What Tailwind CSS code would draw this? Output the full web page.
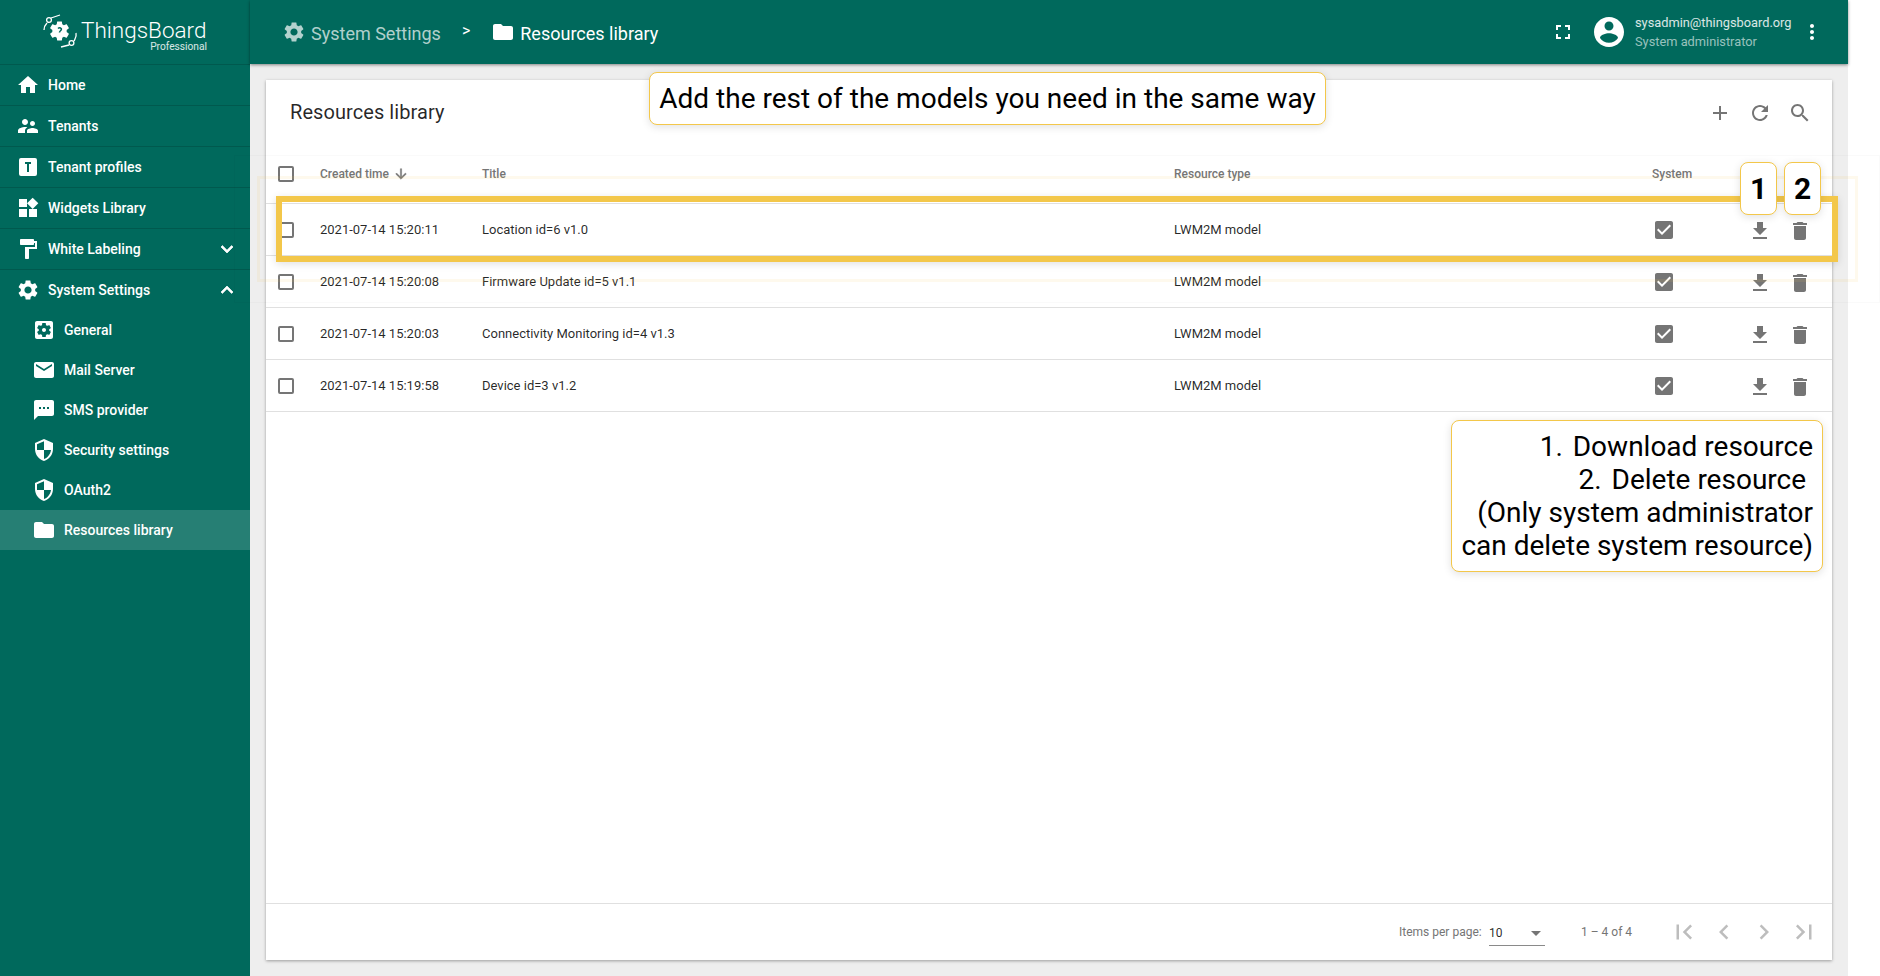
<!DOCTYPE html>
<html lang="en">
<head>
    <meta charset="UTF-8">
    <title>Resources library</title>
    <script src="https://cdn.jsdelivr.net/npm/@tailwindcss/browser@4"></script>
</head>
<body class="bg-white font-['Roboto',sans-serif] overflow-hidden">
    <svg class="hidden">
        <symbol id="i-home" viewBox="0 0 24 24"><path d="M10 20v-6h4v6h5v-8h3L12 3 2 12h3v8z"/></symbol>
        <symbol id="i-people" viewBox="0 0 24 24"><path d="M16.5 12c1.38 0 2.49-1.12 2.49-2.5S17.88 7 16.5 7C15.12 7 14 8.12 14 9.5s1.12 2.5 2.5 2.5zM9 11c1.66 0 2.99-1.34 2.99-3S10.66 5 9 5C7.34 5 6 6.34 6 8s1.34 3 3 3zm7.5 3c-1.83 0-5.5.92-5.5 2.75V19h11v-2.25c0-1.83-3.67-2.75-5.5-2.75zM9 13c-2.33 0-7 1.17-7 3.5V19h7v-2.25c0-.85.33-2.34 2.37-3.47C10.5 13.1 9.66 13 9 13z"/></symbol>
        <symbol id="i-tbox" viewBox="0 0 24 24"><path d="M9 7V9H11V17H13V9H15V7H9M5 3H19A2 2 0 0 1 21 5V19A2 2 0 0 1 19 21H5A2 2 0 0 1 3 19V5A2 2 0 0 1 5 3Z"/></symbol>
        <symbol id="i-widgets" viewBox="0 0 24 24"><path d="M13 13v8h8v-8h-8zM3 21h8v-8H3v8zM3 3v8h8V3H3zm13.66-1.31L11 7.34 16.66 13l5.66-5.66-5.66-5.65z"/></symbol>
        <symbol id="i-paint" viewBox="0 0 24 24"><path d="M18 4V3c0-.55-.45-1-1-1H5c-.55 0-1 .45-1 1v4c0 .55.45 1 1 1h12c.55 0 1-.45 1-1V6h1v4H9v11c0 .55.45 1 1 1h2c.55 0 1-.45 1-1v-9h8V4h-3z"/></symbol>
        <symbol id="i-settings" viewBox="0 0 24 24"><path d="M19.14,12.94c0.04-0.3,0.06-0.61,0.06-0.94c0-0.32-0.02-0.64-0.07-0.94l2.03-1.58c0.18-0.14,0.23-0.41,0.12-0.61 l-1.92-3.32c-0.12-0.22-0.37-0.29-0.59-0.22l-2.39,0.96c-0.5-0.38-1.03-0.7-1.62-0.94L14.4,2.81c-0.04-0.24-0.24-0.41-0.48-0.41 h-3.84c-0.24,0-0.43,0.17-0.47,0.41L9.25,5.35C8.66,5.59,8.12,5.92,7.63,6.29L5.24,5.33c-0.22-0.08-0.47,0-0.59,0.22L2.74,8.87 C2.62,9.08,2.66,9.34,2.86,9.48l2.03,1.58C4.84,11.36,4.8,11.69,4.8,12s0.02,0.64,0.07,0.94l-2.03,1.58 c-0.18,0.14-0.23,0.41-0.12,0.61l1.92,3.32c0.12,0.22,0.37,0.29,0.59,0.22l2.39-0.96c0.5,0.38,1.03,0.7,1.62,0.94l0.36,2.54 c0.05,0.24,0.24,0.41,0.48,0.41h3.84c0.24,0,0.44-0.17,0.47-0.41l0.36-2.54c0.59-0.24,1.13-0.56,1.62-0.94l2.39,0.96 c0.22,0.08,0.47,0,0.59-0.22l1.92-3.32c0.12-0.22,0.07-0.47-0.12-0.61L19.14,12.94z M12,15.6c-1.98,0-3.6-1.62-3.6-3.6 s1.62-3.6,3.6-3.6s3.6,1.62,3.6,3.6S13.98,15.6,12,15.6z"/></symbol>
        <symbol id="i-general" viewBox="0 0 24 24"><path d="M12 10c-1.1 0-2 .9-2 2s.9 2 2 2 2-.9 2-2-.9-2-2-2zm7-7H5c-1.11 0-2 .9-2 2v14c0 1.1.89 2 2 2h14c1.11 0 2-.9 2-2V5c0-1.1-.89-2-2-2zm-1.75 9c0 .23-.02.46-.05.68l1.48 1.16c.13.11.17.3.08.45l-1.4 2.42c-.09.15-.27.21-.43.15l-1.74-.7c-.36.28-.76.51-1.18.69l-.26 1.85c-.03.17-.18.3-.35.3h-2.8c-.17 0-.32-.13-.35-.3l-.26-1.85c-.43-.18-.82-.41-1.18-.69l-1.74.7c-.16.06-.34 0-.43-.15l-1.4-2.42c-.09-.15-.05-.34.08-.45l1.48-1.16c-.03-.22-.05-.45-.05-.68 0-.23.02-.46.05-.68l-1.48-1.16c-.13-.11-.17-.3-.08-.45l1.4-2.42c.09-.15.27-.21.43-.15l1.74.7c.36-.28.76-.51 1.18-.69l.26-1.85c.03-.17.18-.3.35-.3h2.8c.17 0 .32.13.35.3l.26 1.85c.43.18.82.41 1.18.69l1.74-.7c.16-.06.34 0 .43.15l1.4 2.42c.09.15.05.34-.08.45l-1.48 1.16c.03.22.05.45.05.68z"/></symbol>
        <symbol id="i-mail" viewBox="0 0 24 24"><path d="M20 4H4c-1.1 0-1.99.9-1.99 2L2 18c0 1.1.9 2 2 2h16c1.1 0 2-.9 2-2V6c0-1.1-.9-2-2-2zm0 4l-8 5-8-5V6l8 5 8-5v2z"/></symbol>
        <symbol id="i-sms" viewBox="0 0 24 24"><path d="M20 2H4c-1.1 0-1.99.9-1.99 2L2 22l4-4h14c1.1 0 2-.9 2-2V4c0-1.1-.9-2-2-2zM9 11H7V9h2v2zm4 0h-2V9h2v2zm4 0h-2V9h2v2z"/></symbol>
        <symbol id="i-security" viewBox="0 0 24 24"><path d="M12 1L3 5v6c0 5.55 3.84 10.74 9 12 5.16-1.26 9-6.45 9-12V5l-9-4zm0 10.99h7c-.53 4.12-3.28 7.79-7 8.94V12H5V6.3l7-3.11v8.8z"/></symbol>
        <symbol id="i-folder" viewBox="0 0 24 24"><path d="M10 4H4c-1.1 0-1.99.9-1.99 2L2 18c0 1.1.9 2 2 2h16c1.1 0 2-.9 2-2V8c0-1.1-.9-2-2-2h-8l-2-2z"/></symbol>
        <symbol id="i-more" viewBox="0 0 24 24"><path d="M16.59 8.59L12 13.17 7.41 8.59 6 10l6 6 6-6z"/></symbol>
        <symbol id="i-less" viewBox="0 0 24 24"><path d="M12 8l-6 6 1.41 1.41L12 10.83l4.59 4.58L18 14z"/></symbol>
        <symbol id="i-download" viewBox="0 0 24 24"><path d="M19 9h-4V3H9v6H5l7 7 7-7zM5 18v2h14v-2H5z"/></symbol>
        <symbol id="i-delete" viewBox="0 0 24 24"><path d="M6 19c0 1.1.9 2 2 2h8c1.1 0 2-.9 2-2V7H6v12zM19 4h-3.5l-1-1h-5l-1 1H5v2h14V4z"/></symbol>
        <symbol id="i-check" viewBox="0 0 24 24"><path d="M19 3H5c-1.11 0-2 .9-2 2v14c0 1.1.89 2 2 2h14c1.11 0 2-.9 2-2V5c0-1.11-.89-2-2-2zm-9 14l-5-5 1.41-1.41L10 14.17l7.59-7.59L19 8l-9 9z"/></symbol>
    </svg>

    <div class="relative w-[1848px] h-[976px] flex bg-[#eeeeee]">
        <!-- sidebar -->
        <aside class="w-[250px] shrink-0 bg-[#00695c] text-white text-sm font-medium">
            <div class="h-[65px] border-b border-black/15 flex items-start pt-[14px] pl-[43px]">
                <svg class="w-[35px] h-[35px] fill-white" viewBox="0 0 35 35">
                    <g transform="translate(4.5 5) scale(1)"><use href="#i-settings" width="24" height="24"/></g>
                    <circle cx="16.5" cy="17" r="5" fill="white"/>
                    <path d="M15 14.5c1.5-1.5 4-.5 3.3 1.3-.4 1-1.8 1.2-1.8 2.7" fill="none" stroke="#00695c" stroke-width="1.6"/>
                    <path d="M1 16C1 12 3 10 4 9M8 4 17 1" fill="none" stroke="white" stroke-width="1.3"/>
                    <circle cx="6" cy="6" r="2.4" fill="none" stroke="white" stroke-width="1.3"/>
                    <path d="M33 19c1 4-1 6-2 8M26 31l-8 2" fill="none" stroke="white" stroke-width="1.3"/>
                    <circle cx="28.500" cy="29" r="2.4" fill="none" stroke="white" stroke-width="1.3"/>
                </svg>
                <div class="ml-[3px] w-[126px]">
                    <div class="text-[22.5px] leading-[26px] font-light mt-[3px] whitespace-nowrap">ThingsBoard</div>
                    <div class="text-[10.2px] leading-[12px] -mt-[2px] font-normal text-right text-white/85">Professional</div>
                </div>
            </div>
            <nav>
                <a class="h-[41px] border-b border-black/15 flex items-center gap-2 pl-4"><svg class="w-6 h-6 fill-white"><use href="#i-home"/></svg>Home</a>
                <a class="h-[41px] border-b border-black/15 flex items-center gap-2 pl-4"><svg class="w-6 h-6 fill-white"><use href="#i-people"/></svg>Tenants</a>
                <a class="h-[41px] border-b border-black/15 flex items-center gap-2 pl-4"><svg class="w-6 h-6 fill-white"><use href="#i-tbox"/></svg>Tenant profiles</a>
                <a class="h-[41px] border-b border-black/15 flex items-center gap-2 pl-4"><svg class="w-6 h-6 fill-white"><use href="#i-widgets"/></svg>Widgets Library</a>
                <a class="h-[41px] border-b border-black/15 flex items-center gap-2 pl-4"><svg class="w-6 h-6 fill-white"><use href="#i-paint"/></svg>White Labeling<svg class="w-6 h-6 fill-white stroke-white stroke-[0.7] ml-auto mr-[11px]"><use href="#i-more"/></svg></a>
                <a class="h-10 flex items-center gap-2 pl-4"><svg class="w-6 h-6 fill-white"><use href="#i-settings"/></svg>System Settings<svg class="w-6 h-6 fill-white stroke-white stroke-[0.7] ml-auto mr-[11px] -mt-[1px]"><use href="#i-less"/></svg></a>
                <a class="h-10 flex items-center gap-2 pl-8"><svg class="w-6 h-6 fill-white"><use href="#i-general"/></svg>General</a>
                <a class="h-10 flex items-center gap-2 pl-8"><svg class="w-6 h-6 fill-white"><use href="#i-mail"/></svg>Mail Server</a>
                <a class="h-10 flex items-center gap-2 pl-8"><svg class="w-6 h-6 fill-white"><use href="#i-sms"/></svg>SMS provider</a>
                <a class="h-10 flex items-center gap-2 pl-8"><svg class="w-6 h-6 fill-white"><use href="#i-security"/></svg>Security settings</a>
                <a class="h-10 flex items-center gap-2 pl-8"><svg class="w-6 h-6 fill-white"><use href="#i-security"/></svg>OAuth2</a>
                <a class="h-10 flex items-center gap-2 pl-8 bg-white/15"><svg class="w-6 h-6 fill-white"><use href="#i-folder"/></svg>Resources library</a>
            </nav>
        </aside>

        <div class="flex-1 flex flex-col min-w-0">
            <!-- top bar -->
            <header class="h-16 shrink-0 bg-[#00695c] flex items-center pl-8 pr-6 shadow-[0_1px_3px_rgba(0,0,0,0.45)] text-white z-10">
                <svg class="w-6 h-6 fill-white/70"><use href="#i-settings"/></svg>
                <span class="ml-[5px] text-lg text-white/70 mt-[4px]">System Settings</span>
                <span class="ml-[21px] mr-[21px] text-base -mt-[3px]">&gt;</span>
                <svg class="w-6 h-6 fill-white"><use href="#i-folder"/></svg>
                <span class="ml-[5px] text-lg mt-[4px]">Resources library</span>
                <svg class="w-6 h-6 fill-white ml-auto" viewBox="0 0 24 24"><path d="M7 14H5v5h5v-2H7v-3zm-2-4h2V7h3V5H5v5zm12 7h-3v2h5v-5h-2v3zM14 5v2h3v3h2V5h-5z"/></svg>
                <svg class="w-9 h-9 fill-white ml-4" viewBox="0 0 24 24"><path d="M12 2C6.48 2 2 6.48 2 12s4.48 10 10 10 10-4.48 10-10S17.52 2 12 2zm0 3c1.66 0 3 1.34 3 3s-1.34 3-3 3-3-1.34-3-3 1.34-3 3-3zm0 14.2c-2.5 0-4.71-1.28-6-3.22.03-1.99 4-3.08 6-3.08 1.99 0 5.97 1.09 6 3.08-1.29 1.94-3.5 3.22-6 3.22z"/></svg>
                <div class="ml-2 w-[165px] text-[12.8px] leading-[19px]">
                    <div class="text-white/85">sysadmin@thingsboard.org</div>
                    <div class="text-white/60">System administrator</div>
                </div>
                <svg class="w-6 h-6 fill-white" viewBox="0 0 24 24"><path d="M12 8c1.1 0 2-.9 2-2s-.9-2-2-2-2 .9-2 2 .9 2 2 2zm0 2c-1.1 0-2 .9-2 2s.9 2 2 2 2-.9 2-2-.9-2-2-2zm0 6c-1.1 0-2 .9-2 2s.9 2 2 2 2-.9 2-2-.9-2-2-2z"/></svg>
            </header>

            <!-- content -->
            <main class="flex-1 p-4 min-h-0">
                <section class="h-full bg-white flex flex-col shadow-[0_1px_3px_rgba(0,0,0,0.35)]">
                    <div class="h-16 shrink-0 flex items-center pl-6 pr-5 gap-4">
                        <h1 class="text-xl text-black/85 mr-auto tracking-[0.07px]">Resources library</h1>
                        <svg class="w-6 h-6 fill-[#757575] mt-[2px]" viewBox="0 0 24 24"><path d="M19 13h-6v6h-2v-6H5v-2h6V5h2v6h6v2z"/></svg>
                        <svg class="w-6 h-6 fill-[#757575] mt-[2px]" viewBox="0 0 24 24"><path d="M17.65 6.35C16.2 4.9 14.21 4 12 4c-4.42 0-7.99 3.58-7.99 8s3.57 8 7.99 8c3.73 0 6.84-2.55 7.73-6h-2.08c-.82 2.33-3.04 4-5.65 4-3.31 0-6-2.69-6-6s2.69-6 6-6c1.66 0 3.14.69 4.22 1.78L13 11h7V4l-2.35 2.35z"/></svg>
                        <svg class="w-6 h-6 fill-[#757575] mt-[2px]" viewBox="0 0 24 24"><path d="M15.5 14h-.79l-.28-.27C15.41 12.59 16 11.11 16 9.5 16 5.91 13.09 3 9.5 3S3 5.91 3 9.5 5.91 16 9.5 16c1.61 0 3.09-.59 4.23-1.57l.27.28v.79l5 4.99L20.49 19l-4.99-5zm-6 0C7.01 14 5 11.99 5 9.5S7.01 5 9.5 5 14 7.01 14 9.5 11.99 14 9.5 14z"/></svg>
                    </div>

                    <div class="h-[60px] shrink-0 flex items-center border-b border-[#e0e0e0] text-xs font-medium text-[#757575]">
                        <div class="w-[54px] pl-3"><div class="w-4 h-4 border-2 border-[#757575] rounded-[2px]"></div></div>
                        <div class="w-[162px] flex items-center gap-1">Created time<svg class="w-4 h-4 fill-[#757575] stroke-[#757575] stroke-[0.6]" viewBox="0 0 24 24"><path d="M20 12l-1.41-1.41L13 16.17V4h-2v12.17l-5.58-5.59L4 12l8 8 8-8z"/></svg></div>
                        <div class="w-[692px]">Title</div>
                        <div class="w-[478px]">Resource type</div>
                        <div>System</div>
                    </div>

                    <div class="h-[52px] shrink-0 flex items-center border-b border-[#e0e0e0] text-[13px] text-black/85">
                        <div class="w-[54px] pl-3"><div class="w-4 h-4 border-2 border-[#757575] rounded-[2px]"></div></div>
                        <div class="w-[162px]">2021-07-14 15:20:11</div>
                        <div class="w-[692px]">Location id=6 v1.0</div>
                        <div class="w-[478px]">LWM2M model</div>
                        <svg class="w-6 h-6 fill-[#757575]"><use href="#i-check"/></svg>
                        <svg class="w-6 h-6 fill-[#757575] ml-[72px] mt-[2px]"><use href="#i-download"/></svg>
                        <svg class="w-6 h-6 fill-[#757575] ml-4 mt-[2px]"><use href="#i-delete"/></svg>
                    </div>
                    <div class="h-[52px] shrink-0 flex items-center border-b border-[#e0e0e0] text-[13px] text-black/85">
                        <div class="w-[54px] pl-3"><div class="w-4 h-4 border-2 border-[#757575] rounded-[2px]"></div></div>
                        <div class="w-[162px]">2021-07-14 15:20:08</div>
                        <div class="w-[692px]">Firmware Update id=5 v1.1</div>
                        <div class="w-[478px]">LWM2M model</div>
                        <svg class="w-6 h-6 fill-[#757575]"><use href="#i-check"/></svg>
                        <svg class="w-6 h-6 fill-[#757575] ml-[72px] mt-[2px]"><use href="#i-download"/></svg>
                        <svg class="w-6 h-6 fill-[#757575] ml-4 mt-[2px]"><use href="#i-delete"/></svg>
                    </div>
                    <div class="h-[52px] shrink-0 flex items-center border-b border-[#e0e0e0] text-[13px] text-black/85">
                        <div class="w-[54px] pl-3"><div class="w-4 h-4 border-2 border-[#757575] rounded-[2px]"></div></div>
                        <div class="w-[162px]">2021-07-14 15:20:03</div>
                        <div class="w-[692px]">Connectivity Monitoring id=4 v1.3</div>
                        <div class="w-[478px]">LWM2M model</div>
                        <svg class="w-6 h-6 fill-[#757575]"><use href="#i-check"/></svg>
                        <svg class="w-6 h-6 fill-[#757575] ml-[72px] mt-[2px]"><use href="#i-download"/></svg>
                        <svg class="w-6 h-6 fill-[#757575] ml-4 mt-[2px]"><use href="#i-delete"/></svg>
                    </div>
                    <div class="h-[52px] shrink-0 flex items-center border-b border-[#e0e0e0] text-[13px] text-black/85">
                        <div class="w-[54px] pl-3"><div class="w-4 h-4 border-2 border-[#757575] rounded-[2px]"></div></div>
                        <div class="w-[162px]">2021-07-14 15:19:58</div>
                        <div class="w-[692px]">Device id=3 v1.2</div>
                        <div class="w-[478px]">LWM2M model</div>
                        <svg class="w-6 h-6 fill-[#757575]"><use href="#i-check"/></svg>
                        <svg class="w-6 h-6 fill-[#757575] ml-[72px] mt-[2px]"><use href="#i-download"/></svg>
                        <svg class="w-6 h-6 fill-[#757575] ml-4 mt-[2px]"><use href="#i-delete"/></svg>
                    </div>

                    <div class="mt-auto h-[57px] shrink-0 border-t border-[#e0e0e0] flex items-center text-xs text-[#757575] pl-[1133px]">
                        <span class="w-[90px]">Items per page:</span>
                        <div class="w-[56px] h-[25px] mt-[1px] border-b border-[#8a8a8a] flex items-center text-black/85 relative top-[1px]">10<span class="ml-auto mr-[4px] border-x-[5px] border-x-transparent border-t-[5px] border-t-[#757575]"></span></div>
                        <span class="ml-[36px] w-[88px]">1 – 4 of 4</span>
                        <svg class="w-[30px] h-[30px] fill-[#bdbdbd]" viewBox="0 0 24 24"><path d="M18.41 16.59L13.82 12l4.59-4.59L17 6l-6 6 6 6zM6 6h2v12H6z"/></svg>
                        <svg class="w-[30px] h-[30px] fill-[#bdbdbd] ml-[10px]" viewBox="0 0 24 24"><path d="M15.41 7.41L14 6l-6 6 6 6 1.41-1.41L10.83 12z"/></svg>
                        <svg class="w-[30px] h-[30px] fill-[#bdbdbd] ml-[10px]" viewBox="0 0 24 24"><path d="M10 6L8.59 7.41 13.17 12l-4.58 4.59L10 18l6-6z"/></svg>
                        <svg class="w-[30px] h-[30px] fill-[#bdbdbd] ml-[10px]" viewBox="0 0 24 24"><path d="M5.59 7.41L10.18 12l-4.59 4.59L7 18l6-6-6-6zM16 6h2v12h-2z"/></svg>
                    </div>
                </section>
            </main>
        </div>

        <!-- tutorial annotations drawn over the screenshot -->
        <div class="absolute left-[234px] top-[155px] w-[1646px] h-[148px] border border-black/[0.02]"></div>
        <div class="absolute left-[257px] top-[176px] w-[1601px] h-[106px] border-[3px] border-[#f3c74a]/10"></div>
        <div class="absolute left-[276px] top-[196px] w-[1562px] h-[66px] border-[6px] border-[#f3c74a] shadow-[0_2px_8px_rgba(0,0,0,0.12)]"></div>
        <div class="absolute left-[649px] top-[72px] w-[677px] h-[53px] flex items-center justify-center bg-white border border-[#f3c74a] rounded-lg shadow-[0_2px_8px_rgba(0,0,0,0.12)] text-[28px] text-black whitespace-nowrap">Add the rest of the models you need in the same way</div>
        <div class="absolute left-[1740px] top-[162px] w-[37px] h-[53px] flex items-center justify-center bg-white border border-[#f3c74a] rounded-lg shadow-[0_2px_8px_rgba(0,0,0,0.12)] text-[30px] font-bold text-black">1</div>
        <div class="absolute left-[1784px] top-[162px] w-[37px] h-[53px] flex items-center justify-center bg-white border border-[#f3c74a] rounded-lg shadow-[0_2px_8px_rgba(0,0,0,0.12)] text-[30px] font-bold text-black">2</div>
        <div class="absolute left-[1451px] top-[420px] w-[372px] h-[152px] pt-[9px] pr-[9px] bg-white border border-[#f3c74a] rounded-lg shadow-[0_2px_8px_rgba(0,0,0,0.12)] text-[28px] leading-[33px] text-black text-right whitespace-pre-line">1.<span class="ml-[3px]"> Download resource</span>
2.<span class="ml-[3px]"> Delete resource&#160;</span>
(Only system administrator
can delete system resource)</div>
    </div>
</body>
</html>
